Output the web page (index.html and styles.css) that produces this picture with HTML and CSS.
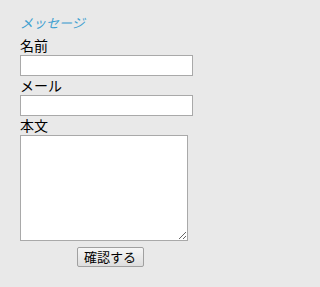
FILE: index.html
```html
<!DOCTYPE html>
<html lang="ja">
<head>
<meta charset="utf-8">
<link rel="stylesheet" href="styles.css">
</head>
<body>
<form class="form">
  <h2 class="title">メッセージ</h2>
  <label class="label">名前</label>
  <input class="field" type="text">
  <label class="label">メール</label>
  <input class="field" type="text">
  <label class="label">本文</label>
  <textarea class="area"></textarea>
  <div class="actions"><button class="btn" type="button">確認する</button></div>
</form>
</body>
</html>
```
FILE: styles.css
```css
html, body {
  margin: 0;
  padding: 0;
  background: #e9e9e9;
}
body {
  font-family: "Noto Sans CJK JP", "Noto Sans", sans-serif;
  color: #000;
  width: 220px;
  height: 287px;
}
.form {
  display: flex;
  flex-direction: column;
  align-items: flex-start;
  padding: 13px 0 0 20px;
}
.title {
  margin: 0 0 4px;
  font-size: 13px;
  font-weight: normal;
  font-style: italic;
  line-height: 19px;
  color: #3fa0d0;
}
.label {
  font-size: 14px;
  line-height: 19px;
  height: 19px;
}
.field {
  box-sizing: border-box;
  width: 173px;
  height: 21px;
  margin: 0;
  padding: 1px 2px;
  border: 1px solid #a9a9a9;
  background: #fff;
  font: 13px "Noto Sans CJK JP", sans-serif;
}
.area {
  box-sizing: border-box;
  width: 168px;
  height: 106px;
  margin: 0;
  padding: 2px;
  border: 1px solid #a9a9a9;
  background: #fff;
  font: 13px "Noto Sans CJK JP", sans-serif;
}
.actions {
  align-self: stretch;
  display: flex;
  justify-content: center;
  padding: 6px 0 0 0;
  margin-left: -20px;
}
.btn {
  box-sizing: border-box;
  width: 67px;
  height: 20px;
  margin: 0;
  padding: 0;
  border: 1px solid #a0a0a0;
  border-radius: 2px;
  background: linear-gradient(#f6f6f6, #dedede);
  font: 13px/18px "Noto Sans CJK JP", sans-serif;
  color: #000;
}
```
